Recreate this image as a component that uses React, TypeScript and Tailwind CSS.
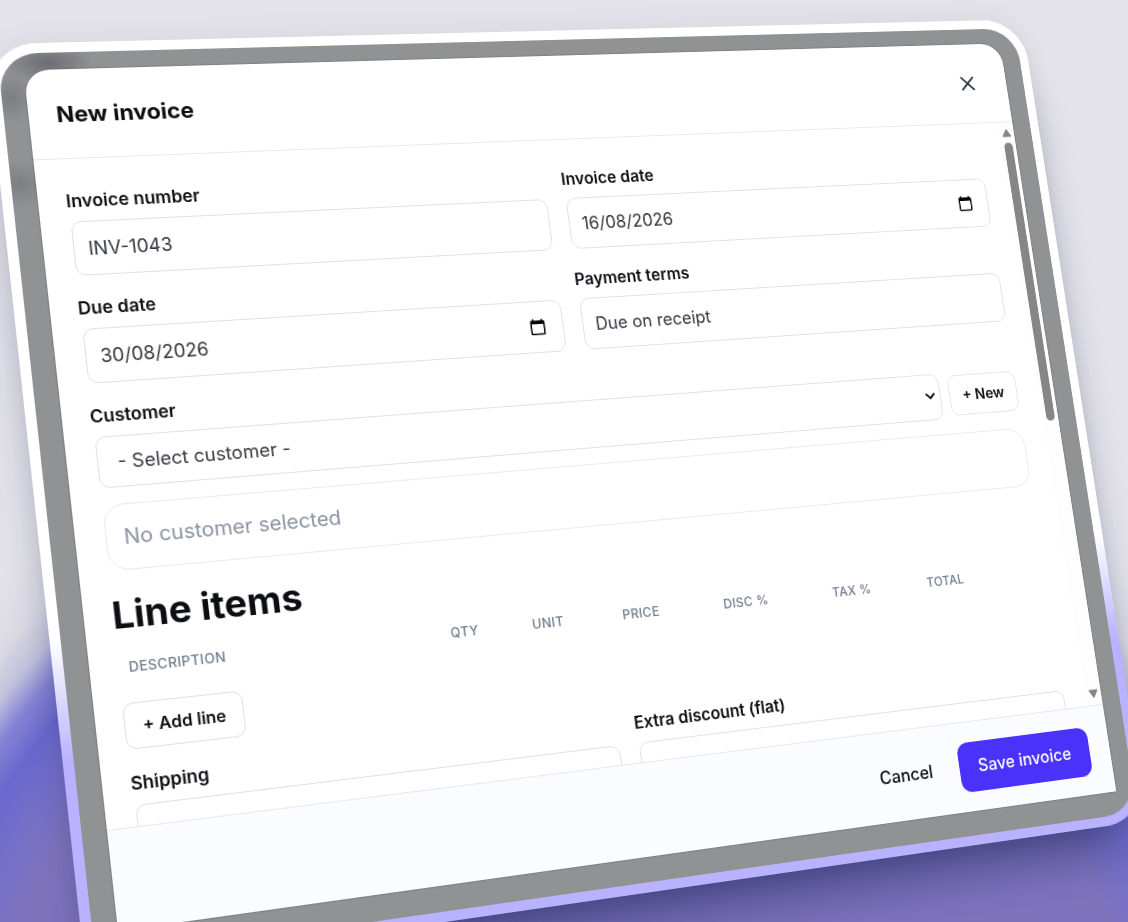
import React from 'react';
import { X } from 'lucide-react';

interface FieldProps {
  id: string;
  label: string;
  value?: string;
  date?: boolean;
}

const COLUMNS = [
  { name: 'Description', width: 'w-[310px]' },
  { name: 'Qty', width: 'w-[83px]' },
  { name: 'Unit', width: 'w-[94px]' },
  { name: 'Price', width: 'w-[108px]' },
  { name: 'Disc %', width: 'w-[120px]' },
  { name: 'Tax %', width: 'w-[107px]' },
  { name: 'Total', width: 'w-auto' },
];

const CalendarIcon: React.FC = () => (
  <svg viewBox="0 0 24 24" className="h-[18px] w-[18px]" fill="currentColor" aria-hidden="true">
    <path d="M20 3h-1V1h-2v2H7V1H5v2H4c-1.1 0-2 .9-2 2v16c0 1.1.9 2 2 2h16c1.1 0 2-.9 2-2V5c0-1.1-.9-2-2-2zm0 18H4V8h16v13z" />
  </svg>
);

const Field: React.FC<FieldProps> = ({ id, label, value = '', date = false }) => (
  <div className="flex flex-col gap-[10px]">
    <label htmlFor={id} className="text-[17px] leading-5 font-semibold">{label}</label>
    <div className="mx-0.5 flex h-[54px] items-center rounded-[10px] border border-[#dfe1ea] bg-white pr-[17px] pl-[13px]">
      <input
        id={id}
        type="text"
        defaultValue={value}
        className="h-full min-w-0 flex-1 bg-transparent text-[18px] text-[#33363c] outline-none"
      />
      {date && (
        <button type="button" aria-label={`Pick ${label.toLowerCase()}`} className="text-black">
          <CalendarIcon />
        </button>
      )}
    </div>
  </div>
);

const ScrollBar: React.FC = () => (
  <div className="flex w-[18px] shrink-0 flex-col items-center justify-between bg-[#fdfdfd] py-[7px]">
    <div className="flex flex-col items-center gap-[6px]">
      <svg viewBox="0 0 12 10" className="h-[10px] w-3" fill="#858585" aria-hidden="true">
        <path d="M6 1 11 9H1z" stroke="#858585" strokeLinejoin="round" />
      </svg>
      <div className="h-[312px] w-[10px] rounded-full bg-[#878685]" />
    </div>
    <svg viewBox="0 0 12 10" className="h-[10px] w-3" fill="#858585" aria-hidden="true">
      <path d="M6 9 1 1h10z" stroke="#858585" strokeLinejoin="round" />
    </svg>
  </div>
);

const InvoiceModal: React.FC = () => (
  <section
    aria-labelledby="modal-title"
    className="overflow-hidden rounded-t-[24px] bg-white text-[#0c0e12] shadow-[0_0_2px_rgba(0,0,0,0.4)]"
  >
    {/* Header */}
    <header className="flex h-[90px] items-center justify-between border-b border-[#e8e9ec] pr-[33px] pl-[26px]">
      <h1 id="modal-title" className="text-[22px] leading-8 font-bold">New invoice</h1>
      <button type="button" aria-label="Close" className="text-[#2c3644]">
        <X size={27} strokeWidth={1.8} />
      </button>
    </header>

    {/* Body */}
    <div className="flex h-[646px]">
      <div className="min-w-0 flex-1 overflow-hidden pt-8 pr-6 pl-[26px]">
        <div className="grid grid-cols-2 gap-x-4 gap-y-[22px]">
          <Field id="number" label="Invoice number" value="INV-1043" />
          <Field id="invoice-date" label="Invoice date" value="16/08/2026" date />
          <Field id="due-date" label="Due date" value="30/08/2026" date />
          <Field id="terms" label="Payment terms" value="Due on receipt" />
        </div>

        <div className="mt-[22px] flex flex-col gap-[10px]">
          <label htmlFor="customer" className="text-[17px] leading-5 font-semibold">Customer</label>
          <div className="mx-0.5 flex items-center gap-[10px]">
            <div className="relative min-w-0 flex-1">
              <select
                id="customer"
                className="h-[50px] w-full appearance-none rounded-[10px] border border-[#dfe1ea] bg-white pr-8 pl-[18px] text-[18px] text-[#33363c]"
              >
                <option>- Select customer -</option>
              </select>
              <svg
                viewBox="0 0 12 8"
                className="pointer-events-none absolute top-5 right-[6px] h-2 w-3"
                fill="none"
                stroke="#0c0e12"
                strokeWidth="2.2"
                aria-hidden="true"
              >
                <path d="m1 1 5 5 5-5" />
              </svg>
            </div>
            <button type="button" className="h-11 w-20 rounded-[10px] border border-[#e3e4ea] text-[16px] font-semibold">
              + New
            </button>
          </div>
        </div>

        <div className="mx-0.5 mt-4 flex h-16 items-center rounded-[20px] border border-[#e9eaee] px-4 text-[20px] text-[#8a94a3]">
          No customer selected
        </div>

        <h2 className="mt-[22px] text-[36px] leading-10 font-bold">Line items</h2>
        <table className="mt-2 w-full table-fixed">
          <thead>
            <tr>
              {COLUMNS.map((column) => (
                <th
                  key={column.name}
                  scope="col"
                  className={`${column.width} px-[10px] py-3 text-left text-[13px] leading-5 font-medium tracking-wide text-[#6f7b8d] uppercase`}
                >
                  {column.name}
                </th>
              ))}
            </tr>
          </thead>
        </table>
        <button type="button" className="mt-3 h-11 rounded-[10px] border border-[#dfe1e6] px-4 text-[16px] font-semibold">
          + Add line
        </button>

        <div className="mt-[22px] grid grid-cols-2 gap-x-4">
          <Field id="shipping" label="Shipping" />
          <Field id="discount" label="Extra discount (flat)" />
        </div>
      </div>
      <ScrollBar />
    </div>

    {/* Footer */}
    <footer className="flex h-[94px] items-center justify-end gap-2 border-t border-[#e6e8ec] bg-[#fafcff] pr-6 text-[18px]">
      <button type="button" className="h-[52px] px-[22px] font-medium">Cancel</button>
      <button type="button" className="h-[52px] rounded-xl bg-[#4a32fa] px-[22px] font-medium text-white">
        Save invoice
      </button>
    </footer>
  </section>
);

const App: React.FC = () => (
  <main className="h-screen overflow-hidden bg-[#e4e3ea] bg-[radial-gradient(circle_at_50%_1150px,#7f73bd_590px,#7670c8_625px,#6a68cf_665px,#8583d5_695px,#c3c2de_722px,#dddce4_755px,#e4e3ea_800px)] font-['Inter','Open_Sans',sans-serif]">
    {/* Tilted device frame */}
    <div className="w-full max-w-[1104px] origin-top-left rounded-[48px] bg-linear-to-b from-white from-65% to-[#b9b2fe] to-78% p-[10px] shadow-[0_45px_60px_-30px_rgba(20,30,85,0.65),0_0_30px_rgba(40,35,70,0.08)] [transform:matrix3d(1.07718,-0.019756,0,0.00013824,0.10837,0.993706,0,-0.00004649,0,0,1,0,-14.973,44.122,0,0.996693)]">
      <div className="rounded-[38px] bg-[#909294] bg-[radial-gradient(ellipse_44px_20px_at_46px_10px,#6a6d72,transparent),radial-gradient(ellipse_24px_26px_at_8px_44px,#7c7e82,transparent),radial-gradient(ellipse_30px_24px_at_8px_130px,#7c7e82,transparent)] pt-[17px] pr-[21px] pb-[25px] pl-[23px]">
        <InvoiceModal />
      </div>
    </div>
  </main>
);

export default App;
